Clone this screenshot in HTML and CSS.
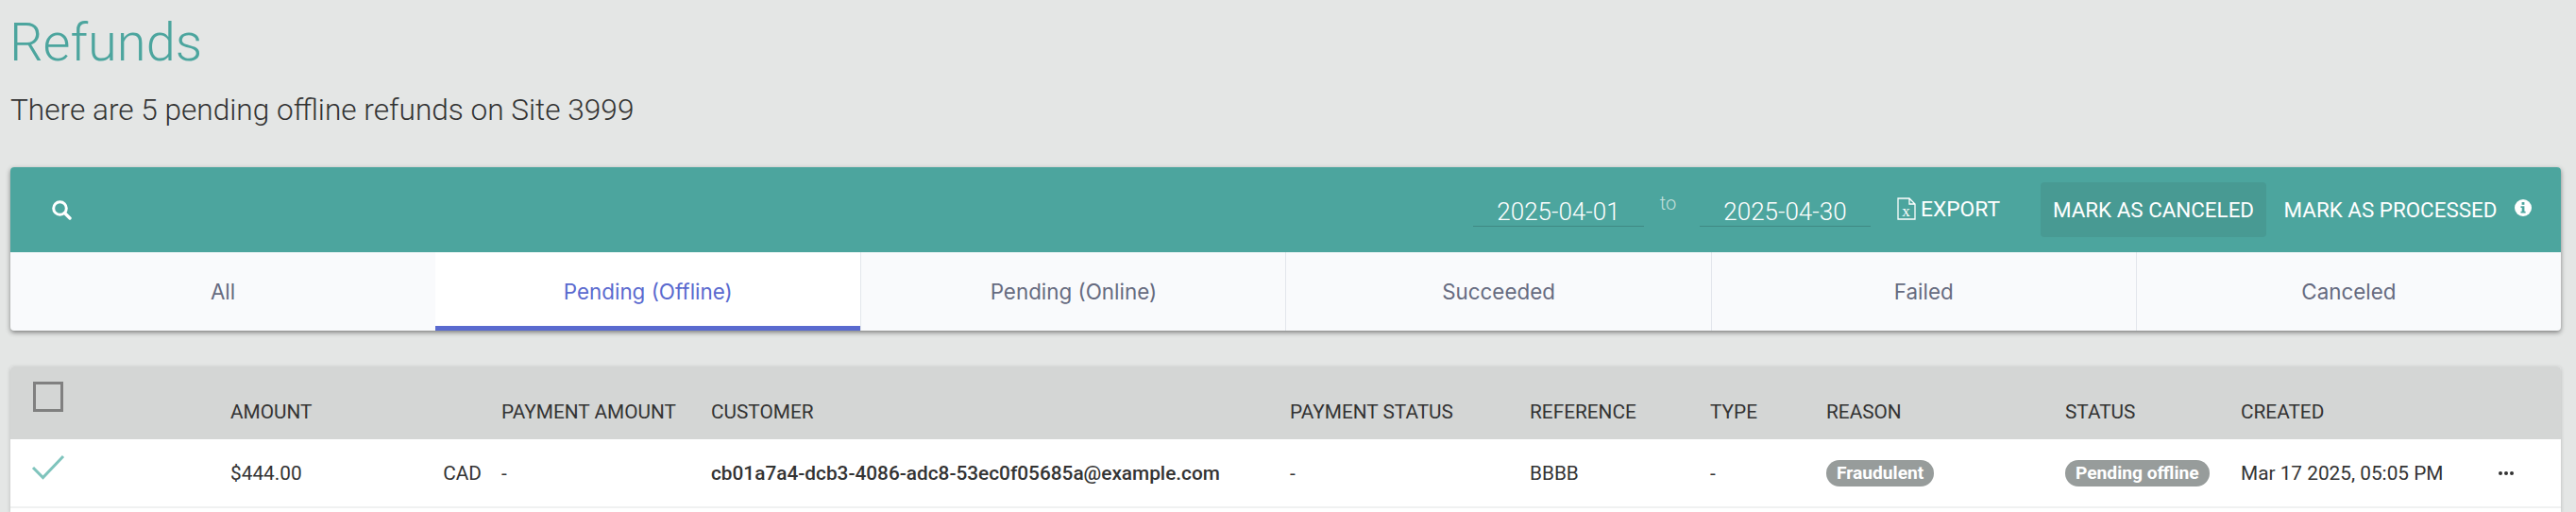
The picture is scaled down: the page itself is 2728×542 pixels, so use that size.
FILE: index.html
```html
<!DOCTYPE html>
<html lang="en">
<head>
<meta charset="utf-8">
<title>Refunds</title>
<link rel="stylesheet" href="styles.css">
</head>
<body>
<header class="page-head">
  <h1 class="title">Refunds</h1>
  <p class="subtitle">There are 5 pending offline refunds on Site 3999</p>
</header>
<section class="panel">
  <div class="toolbar">
    <svg class="search-icon" viewBox="0 0 22 22" width="22" height="22"><circle cx="9.500" cy="9.500" r="6.800" fill="none" stroke="#fff" stroke-width="3"/><path d="M14.500 14.500l5.500 5.500" stroke="#fff" stroke-width="3.400" stroke-linecap="round"/></svg>
    <div class="actions">
      <span class="date">2025-04-01</span>
      <span class="to">to</span>
      <span class="date">2025-04-30</span>
      <a class="export">
        <svg viewBox="0 0 20 24" width="20" height="24"><path d="M1 1h12l6 6v16H1z M13 1v6h6" fill="none" stroke="#fff" stroke-width="1.300"/><text x="9.500" y="20" font-family="Liberation Serif, serif" font-size="17" fill="#fff" text-anchor="middle">x</text></svg>
        <span>EXPORT</span>
      </a>
      <button class="btn btn-active">MARK AS CANCELED</button>
      <button class="btn btn-plain">MARK AS PROCESSED</button>
      <svg class="info-icon" viewBox="0 0 18 18" width="18" height="18"><circle cx="9" cy="9" r="9" fill="#fff"/><rect x="7.600" y="3" width="2.800" height="2.800" fill="#4ca59e"/><path d="M6.500 7.200h3.900v5.600h1.200v1.800H6.500v-1.800h1.200V9H6.500z" fill="#4ca59e"/></svg>
    </div>
  </div>
  <nav class="tabs">
    <a class="tab">All</a>
    <a class="tab tab-active">Pending (Offline)</a>
    <a class="tab">Pending (Online)</a>
    <a class="tab">Succeeded</a>
    <a class="tab">Failed</a>
    <a class="tab">Canceled</a>
  </nav>
</section>
<section class="card">
  <table class="grid">
    <colgroup>
      <col class="c-check"><col class="c-amount"><col class="c-pay"><col class="c-customer"><col class="c-paystatus"><col class="c-ref"><col class="c-type"><col class="c-reason"><col class="c-status"><col class="c-created"><col class="c-more">
    </colgroup>
    <thead>
      <tr>
        <th><span class="checkbox"></span></th>
        <th>AMOUNT</th>
        <th>PAYMENT AMOUNT</th>
        <th>CUSTOMER</th>
        <th>PAYMENT STATUS</th>
        <th>REFERENCE</th>
        <th>TYPE</th>
        <th>REASON</th>
        <th>STATUS</th>
        <th>CREATED</th>
        <th></th>
      </tr>
    </thead>
    <tbody>
      <tr>
        <td class="cell-check"><svg viewBox="0 0 36 28" width="36" height="28"><path d="M2 14l10.500 10.500L34 2" fill="none" stroke="#7fc4bd" stroke-width="3"/></svg></td>
        <td><div class="amount"><span>$444.00</span><span>CAD</span></div></td>
        <td>-</td>
        <td class="email">cb01a7a4-dcb3-4086-adc8-53ec0f05685a@example.com</td>
        <td>-</td>
        <td>BBBB</td>
        <td>-</td>
        <td><span class="pill">Fraudulent</span></td>
        <td><span class="pill">Pending offline</span></td>
        <td>Mar 17 2025, 05:05 PM</td>
        <td><svg class="more" viewBox="0 0 16 4" width="16" height="4"><circle cx="2" cy="2" r="2"/><circle cx="8" cy="2" r="2"/><circle cx="14" cy="2" r="2"/></svg></td>
      </tr>
    </tbody>
  </table>
</section>
</body>
</html>
```

FILE: styles.css
```css
* { box-sizing: border-box; }
html, body { height: 100%; }
body {
  margin: 0;
  padding: 0 16px 0 11px;
  height: 542px;
  overflow: hidden;
  display: flex;
  flex-direction: column;
  background: #e4e6e5;
  font-family: Roboto, "Liberation Sans", sans-serif;
  color: #333;
}
.page-head { height: 177px; padding-top: 13px; }
.title {
  margin: 0 0 0 -1px;
  font-size: 56px;
  line-height: 64px;
  font-weight: 300;
  color: #4ca59e;
}
.subtitle {
  margin: 20px 0 0;
  font-size: 31.6px;
  line-height: 40px;
  font-weight: 300;
  color: #333;
}
.panel {
  border-radius: 4px;
  box-shadow: 0 2px 5px rgba(0,0,0,.45);
  background: #f9fafc;
}
.toolbar {
  height: 90px;
  background: #4ca59e;
  border-radius: 4px 4px 0 0;
  display: flex;
  align-items: center;
  padding: 0 31px 0 44px;
  color: #fff;
}
.search-icon { margin-top: -1px; margin-left: -1px; }
.actions { margin-left: auto; display: flex; align-items: center; }
.date {
  width: 181px;
  height: 35px;
  margin-top: 0;
  padding-top: 1px;
  text-align: center;
  font-size: 26px;
  line-height: 36px;
  font-weight: 300;
  border-bottom: 1px solid #3f8a84;
}
.to {
  width: 59px;
  padding-right: 8px;
  text-align: center;
  margin-top: -15px;
  font-size: 20px;
  font-weight: 300;
  color: #c5e0dd;
}
.export {
  display: flex;
  align-items: center;
  gap: 5px;
  margin-left: 28px;
  font-size: 22.8px;
  font-weight: 400;
  margin-top: -2px;
}
.btn {
  border: 0;
  background: none;
  color: #fff;
  font: 400 22.4px Roboto, sans-serif;
  height: 58px;
  padding: 0;
  border-radius: 4px;
  text-align: center;
}
.btn-active { background: #489a93; margin-left: 43px; width: 239px; white-space: nowrap; }
.btn-plain { margin-left: 5px; width: 253px; white-space: nowrap; }
.info-icon { margin-left: 5px; margin-top: -4px; }
.tabs {
  height: 83px;
  display: grid;
  grid-template-columns: repeat(6, 1fr);
  border-radius: 0 0 4px 4px;
  overflow: hidden;
}
.tab {
  display: flex;
  align-items: center;
  justify-content: center;
  font-family: Inter, Roboto, sans-serif;
  font-size: 22.4px;
  color: #666b80;
  border-left: 1px solid #e3e6ec;
}
.tab:first-child { border-left: 0; }
.tab-active {
  background: #fff;
  color: #5a6acf;
  box-shadow: inset 0 -5px 0 #5a6acf;
  border-left: 0;
}
.card {
  flex: 1;
  margin-top: 38px;
  background: #fff;
  border-radius: 4px 4px 0 0;
  box-shadow: 0 1px 4px rgba(0,0,0,.2);
  overflow: hidden;
}
.grid {
  width: 100%;
  table-layout: fixed;
  border-collapse: collapse;
  font-size: 20.8px;
}
.c-check { width: 233px; }
.c-amount { width: 287px; }
.c-pay { width: 222px; }
.c-customer { width: 613px; }
.c-paystatus { width: 254px; }
.c-ref { width: 191px; }
.c-type { width: 123px; }
.c-reason { width: 253px; }
.c-status { width: 186px; }
.c-created { width: 267px; }
.c-more { width: 72px; }
thead tr { height: 77px; background: #d4d6d5; }
th {
  padding: 0 0 17px;
  vertical-align: bottom;
  text-align: left;
  font-weight: 400;
  line-height: 24px;
  color: #333;
  white-space: nowrap;
}
th:first-child { padding: 0 0 0 24px; vertical-align: top; }
.checkbox {
  display: block;
  width: 32px;
  height: 32px;
  margin-top: 16px;
  border: 3px solid #808080;
}
tbody tr { height: 72px; border-bottom: 2px solid #f0f1f1; }
td { padding: 0; vertical-align: middle; white-space: nowrap; color: #333; }
.cell-check { padding-left: 22px; }
.cell-check svg { display: block; margin: -12px 0 0; }
.amount { display: flex; justify-content: space-between; padding-right: 21px; }
.email { font-weight: 500; }
.pill {
  display: inline-block;
  padding: 0 11px;
  height: 28px;
  line-height: 28px;
  border-radius: 14px;
  background: #979c9b;
  color: #fff;
  font-size: 19.2px;
  font-weight: 700;
}
.more { display: block; margin-left: 6px; fill: #333; }
```
